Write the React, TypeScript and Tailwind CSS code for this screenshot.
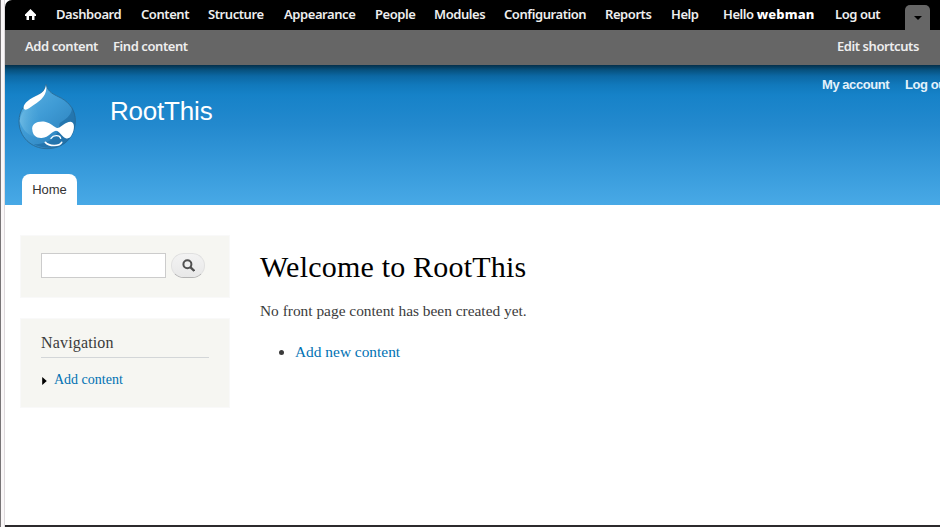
import React from "react";

const menu = [
  { label: "Dashboard", box: "w-[65px]" },
  { label: "Content", box: "w-[47px]" },
  { label: "Structure", box: "w-[56px]" },
  { label: "Appearance", box: "w-[71px]" },
  { label: "People", box: "w-[39px]" },
  { label: "Modules", box: "w-[50px]" },
  { label: "Configuration", box: "w-[81px]" },
  { label: "Reports", box: "w-[46px]" },
  { label: "Help", box: "w-[32px]" },
];

function Toolbar() {
  return (
    <nav className="flex h-[30px] bg-black pl-5 text-[13px] leading-[29px] font-semibold whitespace-nowrap text-[#eee]">
      <svg className="mt-[9px] mr-5 h-[11px] w-[11px] shrink-0" viewBox="0 0 11 11" fill="#fff">
        <path d="M5.5 0 0 5.5V7h1.5v4H4V7h3v4h2.5V7H11V5.5Z" />
      </svg>
      <ul className="flex gap-5">
        {menu.map((m) => (
          <li key={m.label} className={m.box}>{m.label}</li>
        ))}
      </ul>
      <div className="ml-5 w-[92px]">Hello <b className="font-extrabold tracking-[0.15px] text-white">webman</b></div>
      <div className="ml-5 w-[45px]">Log out</div>
      <div className="mt-[5px] ml-[25px] flex h-[25px] w-[25px] justify-center rounded-t-[5px] bg-[#666]">
        <svg className="mt-[11px] h-[4px] w-[8px]" viewBox="0 0 8 4"><path d="M0 0h8L4 4Z" fill="#000" /></svg>
      </div>
    </nav>
  );
}

function Droplet() {
  return (
    <svg className="h-[75px] w-[70px]" viewBox="0 0 210 225">
      <defs>
        <linearGradient id="drop" x1="0" y1="0" x2=".8" y2="1">
          <stop offset="0" stopColor="#5fb5e4" />
          <stop offset=".5" stopColor="#3f9bd5" />
          <stop offset="1" stopColor="#2a7fbb" />
        </linearGradient>
        <linearGradient id="dropLeft" x1="0" y1="0" x2="1" y2="0">
          <stop offset="0" stopColor="#7dc4e8" stopOpacity=".65" />
          <stop offset="1" stopColor="#4aa5d8" stopOpacity="0" />
        </linearGradient>
      </defs>
      <path d="M102 13C108 38 126 43 149 55C174 69 191 94 190 123C188 174 153 206 105 206C57 206 21 170 21 124C21 92 39 69 64 54C85 41 99 35 102 13Z" fill="url(#drop)" stroke="#2a6f9c" strokeWidth="3" />
      <path d="M23 122C27 99 42 77 65 62L87 131L70 171C48 166 31 149 23 122Z" fill="url(#dropLeft)" />
      <path d="M143 129C167 116 181 100 180 81C199 116 191 162 164 186C143 205 97 210 65 193C110 193 139 173 143 129Z" fill="#1a689f" opacity=".6" />
      <path d="M102 15C108 42 87 62 65 75C51 84 41 94 36 86C31 76 46 60 70 49C88 41 99 34 102 15Z" fill="#fff" />
      <path d="M61 150C57 132 76 122 99 125C119 129 126 142 137 144C151 140 158 126 176 125C189 126 188 148 180 163C175 178 162 178 154 170C146 162 139 152 132 152C119 153 112 172 89 174C73 175 62 165 61 150Z" fill="#fff" />
      <path d="M117 175C124 165 143 164 146 175" fill="none" stroke="#fff" strokeWidth="4" strokeLinecap="round" />
      <path d="M100 187C111 199 142 200 149 187" fill="none" stroke="#fff" strokeWidth="5" strokeLinecap="round" />
    </svg>
  );
}

function Header() {
  return (
    <header className="flex h-[140px] flex-col justify-between bg-[linear-gradient(to_bottom,#042f4a_0px,#07517e_5px,#0c68a4_11px,#1179bc_20px,#1682c8_30px,#2389ce_60px,#48a9e6_140px)] font-['Liberation_Sans',Arial,sans-serif]">
      <div className="flex h-[90px] w-full">
        <div className="mt-[15px] ml-[7px] shrink-0"><Droplet /></div>
        <h1 className="mt-[31px] ml-[28px] w-[712px] shrink-0 text-[26px] leading-[30px] tracking-[-0.2px] text-white">RootThis</h1>
        <div className="mt-[11px] flex shrink-0 gap-4 text-[13px] leading-[18px] font-bold tracking-[-0.45px] whitespace-nowrap text-[#e4f2fb]">
          <span className="w-[67px]">My account</span><span>Log out</span>
        </div>
      </div>
      <div className="ml-[17px] h-[31px] w-[55px] rounded-t-[8px] bg-white text-center text-[13px] leading-[31px] text-[#333]">Home</div>
    </header>
  );
}

function Sidebar() {
  return (
    <aside className="flex w-[210px] shrink-0 flex-col gap-5 text-[#3b3b3b]">
      <div className="flex h-[63px] gap-[5px] border border-[#f9f9f9] bg-[#f6f6f2] pt-[17px] pl-5">
        <input aria-label="Search" className="h-[25px] w-[125px] border border-[#ccc] bg-white outline-none" />
        <button aria-label="Search" className="flex h-[25px] w-[34px] items-center justify-center rounded-full border border-[#e0e0e0] border-b-[#b4b4b4] bg-linear-to-b from-[#f3f3f3] to-[#e8e8e8]">
          <svg className="h-[13px] w-[13px]" viewBox="0 0 13 13" fill="none" stroke="#505050"><circle cx="5.4" cy="5.2" r="4" strokeWidth="2" /><path d="m8.3 8.2 4 3.8" strokeWidth="2.3" /></svg>
        </button>
      </div>
      <div className="h-[90px] border border-[#f9f9f9] bg-[#f6f6f2] px-5 pt-[14px]">
        <h2 className="h-[25px] border-b border-[#d3d6d8] text-[16px] leading-[20px] tracking-[0.16px]">Navigation</h2>
        <div className="mt-[12px] flex items-center text-[14px] leading-[20px] text-[#0071b3]">
          <svg className="mt-[2px] mr-[7px] ml-px h-[8px] w-[5px]" viewBox="0 0 4 7"><path d="m0 0 4 3.5L0 7Z" fill="#000" /></svg>
          <a className="whitespace-nowrap">Add content</a>
        </div>
      </div>
    </aside>
  );
}

export default function App() {
  return (
    <div className="flex h-[527px] w-[941px] overflow-hidden bg-white">
      <div className="w-px shrink-0 bg-[#777476]" />
      <div className="w-[4px] shrink-0 border-r border-[#ddd9dc] bg-[#faf7f8]" />
      <div className="flex w-[935px] shrink-0 flex-col overflow-hidden rounded-tl-[7px]">
        <div className="font-['Noto_Sans','Open_Sans',sans-serif] tracking-[-0.43px]">
          <Toolbar />
          <div className="flex h-[35px] items-start justify-between bg-[#666] pr-5 pl-5 text-[13px] leading-[33px] font-semibold whitespace-nowrap text-[#eee]">
            <div className="flex gap-[15px]"><span className="w-[73px]">Add content</span><span className="w-[75px]">Find content</span></div>
            <span className="w-[83px]">Edit shortcuts</span>
          </div>
        </div>
        <Header />
        <main className="flex h-[322px] gap-[30px] border-b-2 border-[#2c2a2d] pt-[30px] pl-[15px] font-['Liberation_Serif',Georgia,serif]">
          <Sidebar />
          <section className="pt-[15px] text-[#3b3b3b]">
            <h1 className="text-[30px] leading-[33px] tracking-[0.2px] whitespace-nowrap text-black">Welcome to RootThis</h1>
            <p className="mt-[18px] text-[15.4px] leading-[20px] whitespace-nowrap">No front page content has been created yet.</p>
            <ul className="mt-[21px] list-disc pl-[35px] text-[15.4px] leading-[20px]"><li><a className="text-[#0071b3]">Add new content</a></li></ul>
          </section>
        </main>
      </div>
    </div>
  );
}
